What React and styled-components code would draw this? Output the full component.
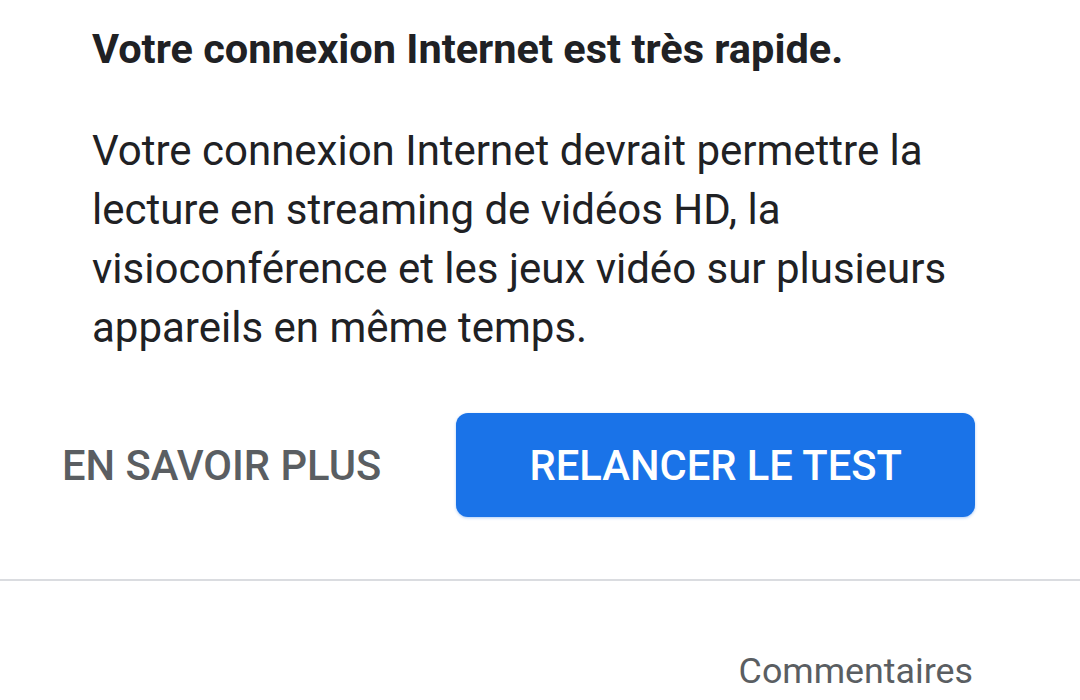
import React from "react";
import styled, { createGlobalStyle } from "styled-components";

const GlobalStyle = createGlobalStyle`
  html, body {
    margin: 0;
    padding: 0;
    background: #ffffff;
    font-family: Roboto, "Noto Sans", sans-serif;
  }
`;

const Page = styled.div`
  width: 1080px;
  height: 700px;
  overflow: hidden;
  background: #ffffff;
  display: flex;
  flex-direction: column;
`;

const Content = styled.section`
  padding: 23px 0 0 92px;
  width: 865px;
`;

const Title = styled.h2`
  margin: 0;
  font-size: 41.5px;
  line-height: 52px;
  font-weight: 700;
  color: #202124;
`;

const Message = styled.p`
  margin: 46px 0 0 0;
  font-size: 42px;
  line-height: 59px;
  font-weight: 400;
  color: #202124;
`;

const Actions = styled.div`
  display: flex;
  align-items: center;
  padding: 56px 0 0 30px;
  gap: 43px;
`;

const TextButton = styled.button`
  border: none;
  background: none;
  padding: 0 32px;
  height: 104px;
  font-family: Roboto, sans-serif;
  font-size: 41.7px;
  font-weight: 500;
  color: #5a5e62;
  cursor: pointer;
`;

const PrimaryButton = styled.button`
  border: none;
  width: 519px;
  height: 104px;
  border-radius: 12px;
  background: #1a73e8;
  box-shadow: 0 1px 3px rgba(26, 115, 232, 0.35);
  font-family: Roboto, sans-serif;
  font-size: 41.7px;
  font-weight: 500;
  color: #ffffff;
  cursor: pointer;
`;

const Divider = styled.hr`
  margin: 62px 0 0 0;
  border: none;
  height: 2px;
  background: #dadce0;
`;

const Footer = styled.div`
  display: flex;
  justify-content: flex-end;
  padding: 69px 107px 0 0;
`;

const FeedbackLink = styled.a`
  font-size: 35.8px;
  line-height: 42px;
  color: #5a5e62;
  text-decoration: none;
`;

export default function App() {
  return (
    <Page>
      <GlobalStyle />
      <Content>
        <Title>Votre connexion Internet est très rapide.</Title>
        <Message>
          Votre connexion Internet devrait permettre la lecture en streaming de
          vidéos HD, la visioconférence et les jeux vidéo sur plusieurs
          appareils en même temps.
        </Message>
      </Content>
      <Actions>
        <TextButton>EN SAVOIR PLUS</TextButton>
        <PrimaryButton>RELANCER LE TEST</PrimaryButton>
      </Actions>
      <Divider />
      <Footer>
        <FeedbackLink href="#">Commentaires</FeedbackLink>
      </Footer>
    </Page>
  );
}
